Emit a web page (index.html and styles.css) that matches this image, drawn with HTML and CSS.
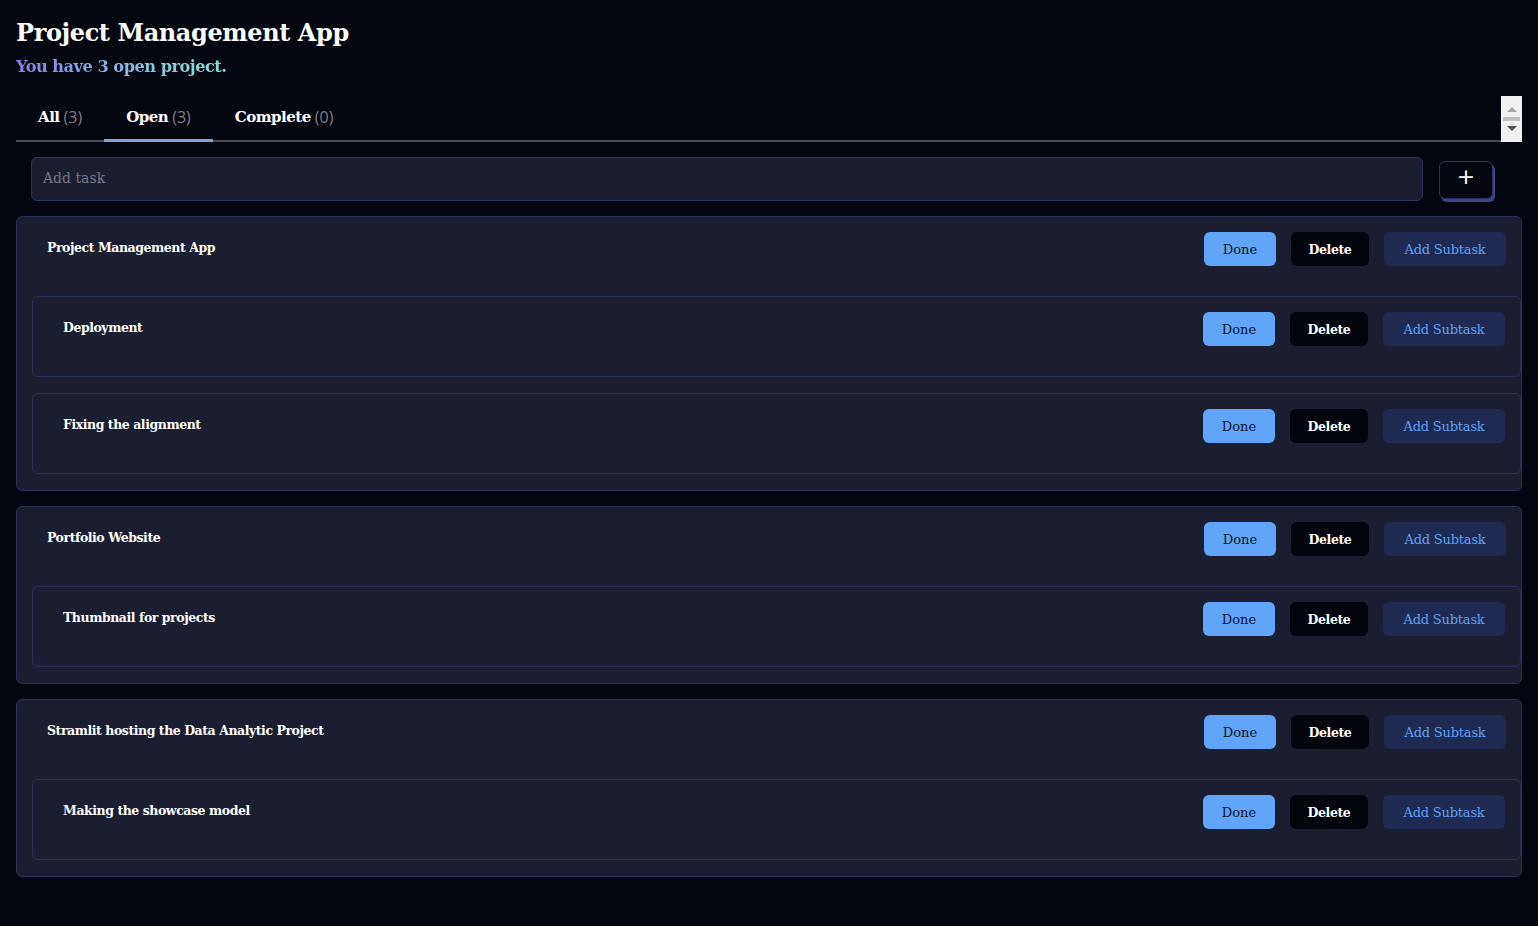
FILE: index.html
```html
<!DOCTYPE html>
<html lang="en">
<head>
<meta charset="utf-8">
<title>Project Management App</title>
<link rel="stylesheet" href="styles.css">
</head>
<body>
<div class="app">
  <header class="head">
    <h1 class="title">Project Management App</h1>
    <p class="subtitle">You have 3 open project.</p>
  </header>

  <nav class="tabs">
    <div class="tab-list">
      <div class="tab"><b>All</b> <span class="count">(3)</span></div>
      <div class="tab active"><b>Open</b> <span class="count">(3)</span></div>
      <div class="tab"><b>Complete</b> <span class="count">(0)</span></div>
    </div>
    <div class="scroller">
      <span class="arr up"></span>
      <span class="thumb"></span>
      <span class="arr down"></span>
    </div>
  </nav>

  <div class="add-row">
    <input class="add-input" type="text" placeholder="Add task">
    <button class="add-btn" type="button">+</button>
  </div>

  <section class="project">
    <div class="row">
      <span class="name">Project Management App</span>
      <div class="actions">
        <button class="btn done">Done</button>
        <button class="btn del">Delete</button>
        <button class="btn sub">Add Subtask</button>
      </div>
    </div>
    <div class="subs">
      <div class="subtask">
        <div class="row">
          <span class="name">Deployment</span>
          <div class="actions">
            <button class="btn done">Done</button>
            <button class="btn del">Delete</button>
            <button class="btn sub">Add Subtask</button>
          </div>
        </div>
      </div>
      <div class="subtask">
        <div class="row">
          <span class="name">Fixing the alignment</span>
          <div class="actions">
            <button class="btn done">Done</button>
            <button class="btn del">Delete</button>
            <button class="btn sub">Add Subtask</button>
          </div>
        </div>
      </div>
    </div>
  </section>

  <section class="project">
    <div class="row">
      <span class="name">Portfolio Website</span>
      <div class="actions">
        <button class="btn done">Done</button>
        <button class="btn del">Delete</button>
        <button class="btn sub">Add Subtask</button>
      </div>
    </div>
    <div class="subs">
      <div class="subtask">
        <div class="row">
          <span class="name">Thumbnail for projects</span>
          <div class="actions">
            <button class="btn done">Done</button>
            <button class="btn del">Delete</button>
            <button class="btn sub">Add Subtask</button>
          </div>
        </div>
      </div>
    </div>
  </section>

  <section class="project">
    <div class="row">
      <span class="name">Stramlit hosting the Data Analytic Project</span>
      <div class="actions">
        <button class="btn done">Done</button>
        <button class="btn del">Delete</button>
        <button class="btn sub">Add Subtask</button>
      </div>
    </div>
    <div class="subs">
      <div class="subtask">
        <div class="row">
          <span class="name">Making the showcase model</span>
          <div class="actions">
            <button class="btn done">Done</button>
            <button class="btn del">Delete</button>
            <button class="btn sub">Add Subtask</button>
          </div>
        </div>
      </div>
    </div>
  </section>
</div>
</body>
</html>
```

FILE: styles.css
```css
* { box-sizing: border-box; }

html, body {
  margin: 0;
  background: #04060f;
  color: #ffffff;
  font-family: "DejaVu Serif", "Liberation Serif", serif;
}

.app {
  width: 1538px;
  padding: 15px 16px 40px 16px;
}

.head { margin: 0; }

.title {
  margin: 0;
  font-size: 24px;
  line-height: 36px;
  font-weight: 700;
  letter-spacing: -0.4px;
  color: #ffffff;
}

.subtitle {
  margin: 3px 0 0 0;
  font-size: 16.2px;
  line-height: 26px;
  font-weight: 700;
  letter-spacing: -0.5px;
  background: linear-gradient(90deg, #8a7de8 0%, #85b9e6 50%, #7fe6d6 100%);
  -webkit-background-clip: text;
  background-clip: text;
  color: transparent;
  width: max-content;
  white-space: nowrap;
}

.tabs {
  margin-top: 16px;
  display: flex;
  align-items: stretch;
  height: 46px;
  width: 1506px;
}

.tab-list {
  flex: 1;
  display: flex;
  border-bottom: 2px solid #4a4c55;
}

.tab {
  padding: 0 22px;
  display: flex;
  align-items: center;
  gap: 4px;
  font-size: 15px;
  margin-bottom: -2px;
  border-bottom: 3px solid transparent;
  padding-bottom: 1px;
}

.tab b { color: #ffffff; letter-spacing: -0.5px; }
.tab .count { color: #7d7f88; font-family: "Open Sans", "Noto Sans", sans-serif; font-size: 16px; }

.tab.active { border-bottom-color: #7ea3d6; }

.scroller {
  width: 21px;
  background: #f1f1f1;
  display: flex;
  flex-direction: column;
  align-items: center;
  justify-content: center;
  gap: 5px;
}

.arr {
  width: 0;
  height: 0;
  border-left: 5px solid transparent;
  border-right: 5px solid transparent;
}
.arr.up { border-bottom: 5px solid #a3a3a3; }
.arr.down { border-top: 5px solid #505050; }
.thumb { width: 17px; height: 4px; background: #c1c1c1; }

.add-row {
  display: flex;
  align-items: flex-start;
  gap: 16px;
  padding: 15px 29px 0 15px;
}

.add-input {
  flex: 1;
  height: 44px;
  background: #1b1e31;
  border: 1px solid #2c3463;
  border-radius: 6px;
  padding: 0 11px 3px 11px;
  color: #ffffff;
  font-family: "DejaVu Serif", serif;
  font-size: 14px;
  outline: none;
}
.add-input::placeholder { color: #767887; }

.add-btn {
  margin-top: 4px;
  width: 54px;
  height: 38px;
  background: #04060f;
  color: #ffffff;
  border: 1px solid #2c3463;
  border-radius: 6px;
  box-shadow: 2px 3px 0 #3a4582;
  font-size: 22px;
  font-family: "DejaVu Sans", sans-serif;
  line-height: 1;
  padding: 0 0 7px 0;
}

.project {
  margin-top: 15px;
  background: #1b1e30;
  border: 1px solid #283159;
  border-radius: 6px;
  padding: 15px 0 16px 15px;
}

.row {
  display: flex;
  justify-content: space-between;
  align-items: flex-start;
  padding: 0 15px 0 15px;
  min-height: 34px;
}

.project > .row { margin-bottom: 30px; }

.name {
  font-size: 12.5px;
  font-weight: 700;
  padding-top: 8px;
  letter-spacing: -0.45px;
}

.subs {
  display: flex;
  flex-direction: column;
  gap: 16px;
}

.subtask {
  border: 1px solid #283159;
  border-radius: 6px;
  padding: 15px 0 30px 15px;
  background: #1b1e30;
}

.actions {
  display: flex;
  gap: 15px;
}

.btn {
  height: 34px;
  border: none;
  border-radius: 6px;
  font-family: "DejaVu Serif", serif;
  font-size: 13px;
  padding: 0;
  cursor: pointer;
}

.btn.done { width: 72px; background: #60a5fa; color: #0b1220; }
.btn.del { width: 78px; background: #03050c; color: #ffffff; font-weight: 700; font-size: 12.5px; letter-spacing: -0.4px; }
.btn.sub { width: 122px; background: #1e2a52; color: #5fa2f7; letter-spacing: -0.2px; }
```
